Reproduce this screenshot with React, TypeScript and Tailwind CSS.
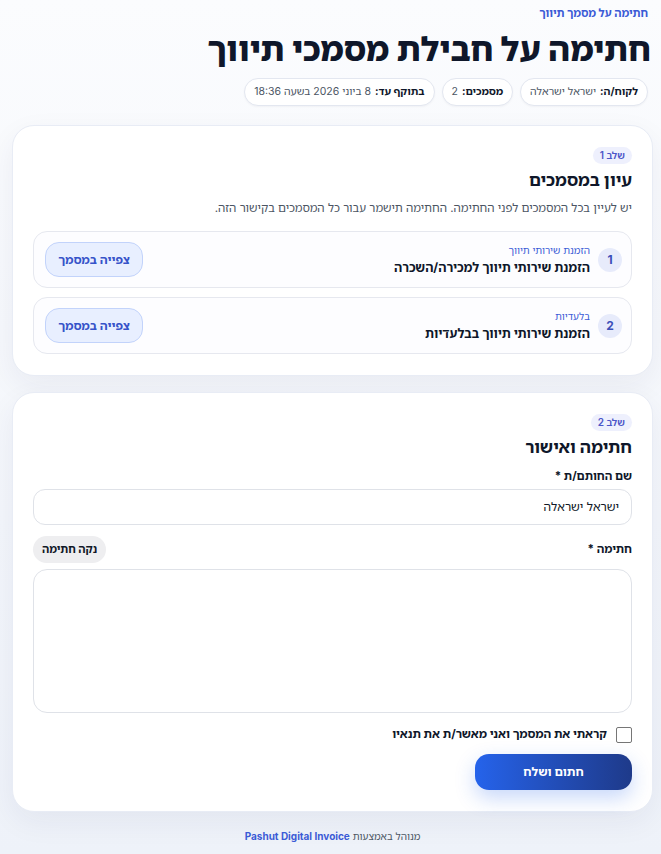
import React from "react";

function Chip({ label, value }: { label: string; value: string }) {
  return (
    <div className="flex items-center gap-[4px] h-[28px] px-[9px] rounded-full border border-[#e3e7f0] bg-white text-[10.5px] shadow-[0_1px_2px_rgba(15,23,42,0.04)]">
      <span className="font-bold text-[#0f172a]">{label}</span>
      <span className="text-[#4b5563]">{value}</span>
    </div>
  );
}

function DocItem({ n, sub, title }: { n: number; sub: string; title: string }) {
  return (
    <div className="flex items-center justify-between h-[57px] pr-[9px] pl-[11px] rounded-[14px] border border-[#e6e8ef] bg-[#fdfdff]">
      <div className="flex items-center gap-[8px]">
        <div className="w-[24px] h-[24px] rounded-full bg-[#e7ebfb] flex items-center justify-center text-[12px] font-bold text-[#3b4fb8]">
          {n}
        </div>
        <div className="flex flex-col gap-[3px]">
          <div className="text-[10px] text-[#3b5bd6] leading-[14px]">{sub}</div>
          <div className="text-[12.5px] font-bold text-[#0f172a] leading-[16px]">{title}</div>
        </div>
      </div>
      <button className="w-[98px] h-[35px] rounded-[14px] bg-[#e8efff] border border-[#c2d3fb] text-[12px] font-bold text-[#3653c9]">
        צפייה במסמך
      </button>
    </div>
  );
}

export default function App() {
  return (
    <div
      dir="rtl"
      className="min-h-[854px] bg-gradient-to-b from-[#fbfcfe] to-[#eef2f9] text-[#0f172a]"
      style={{ fontFamily: 'Inter, "Noto Sans Hebrew", "Noto Sans", "Liberation Sans", sans-serif' }}
    >
      <div className="w-[641px] mr-[8px] ml-[12px] pt-[5px] pb-[10px]">
        <div className="pr-[5px]">
          <div className="text-[11px] font-bold text-[#3b5bd6] leading-[16px]">חתימה על מסמך תיווך</div>
          <h1 className="text-[33px] font-extrabold leading-[44px] mt-[6px] -mr-[3px] text-[#0f172a]">
            חתימה על חבילת מסמכי תיווך
          </h1>
          <div className="flex gap-[7px] mt-[7px]">
            <Chip label="לקוח/ה:" value="ישראל ישראלה" />
            <Chip label="מסמכים:" value="2" />
            <Chip label="בתוקף עד:" value="8 ביוני 2026 בשעה 18:36" />
          </div>
        </div>

        <div className="mt-[19px] rounded-[22px] bg-white border border-[#e8ecf5] shadow-[0_10px_30px_rgba(30,41,80,0.06)] px-[20px] pt-[21px] pb-[21px]">
          <div className="flex">
            <span className="h-[17px] px-[7px] rounded-full bg-[#eef0fd] text-[10px] font-semibold text-[#4b55c8] flex items-center">
              שלב 1
            </span>
          </div>
          <h2 className="text-[17px] font-bold leading-[24px] mt-[4px]">עיון במסמכים</h2>
          <p className="text-[11.6px] text-[#4b5563] mt-[7px] leading-[18px]">
            יש לעיין בכל המסמכים לפני החתימה. החתימה תישמר עבור כל המסמכים בקישור הזה.
          </p>
          <div className="flex flex-col gap-[9px] mt-[14px]">
            <DocItem n={1} sub="הזמנת שירותי תיווך" title="הזמנת שירותי תיווך למכירה/השכרה" />
            <DocItem n={2} sub="בלעדיות" title="הזמנת שירותי תיווך בבלעדיות" />
          </div>
        </div>

        <div className="mt-[16px] rounded-[22px] bg-white border border-[#e8ecf5] shadow-[0_10px_30px_rgba(30,41,80,0.06)] px-[20px] pt-[21px] pb-[21px]">
          <div className="flex">
            <span className="h-[17px] px-[7px] rounded-full bg-[#eef0fd] text-[10px] font-semibold text-[#4b55c8] flex items-center">
              שלב 2
            </span>
          </div>
          <h2 className="text-[17px] font-bold leading-[24px] mt-[4px]">חתימה ואישור</h2>
          <label className="block text-[11.5px] font-bold mt-[8px] leading-[18px]">שם החותם/ת *</label>
          <div className="mt-[4px] h-[36px] rounded-[12px] border border-[#dfe2e8] bg-white flex items-center px-[12px] text-[12px] text-[#111827]">
            ישראל ישראלה
          </div>
          <div className="flex items-center justify-between mt-[11px]">
            <span className="text-[11.5px] font-bold">חתימה *</span>
            <button className="h-[27px] px-[9px] rounded-full bg-[#eeeef0] text-[11px] font-bold text-[#111827]">
              נקה חתימה
            </button>
          </div>
          <div className="mt-[6px] h-[144px] rounded-[14px] border border-[#dfe2e8] bg-white" />
          <label className="flex items-center gap-[9px] mt-[13px]">
            <span className="w-[16px] h-[16px] border border-[#767676] rounded-[2px] bg-white" />
            <span className="text-[11.7px] font-bold">קראתי את המסמך ואני מאשר/ת את תנאיו</span>
          </label>
          <div className="flex mt-[10px]">
            <button className="w-[157px] h-[36px] rounded-[14px] bg-gradient-to-l from-[#1e3a8a] to-[#2563eb] text-white text-[12px] font-bold shadow-[0_8px_20px_rgba(37,99,235,0.25)]">
              חתום ושלח
            </button>
          </div>
        </div>

        <div className="text-center text-[10px] text-[#4b5563] mt-[17px]">
          מנוהל באמצעות <span className="font-bold text-[#3b5bd6]">Pashut Digital Invoice</span>
        </div>
      </div>
    </div>
  );
}
